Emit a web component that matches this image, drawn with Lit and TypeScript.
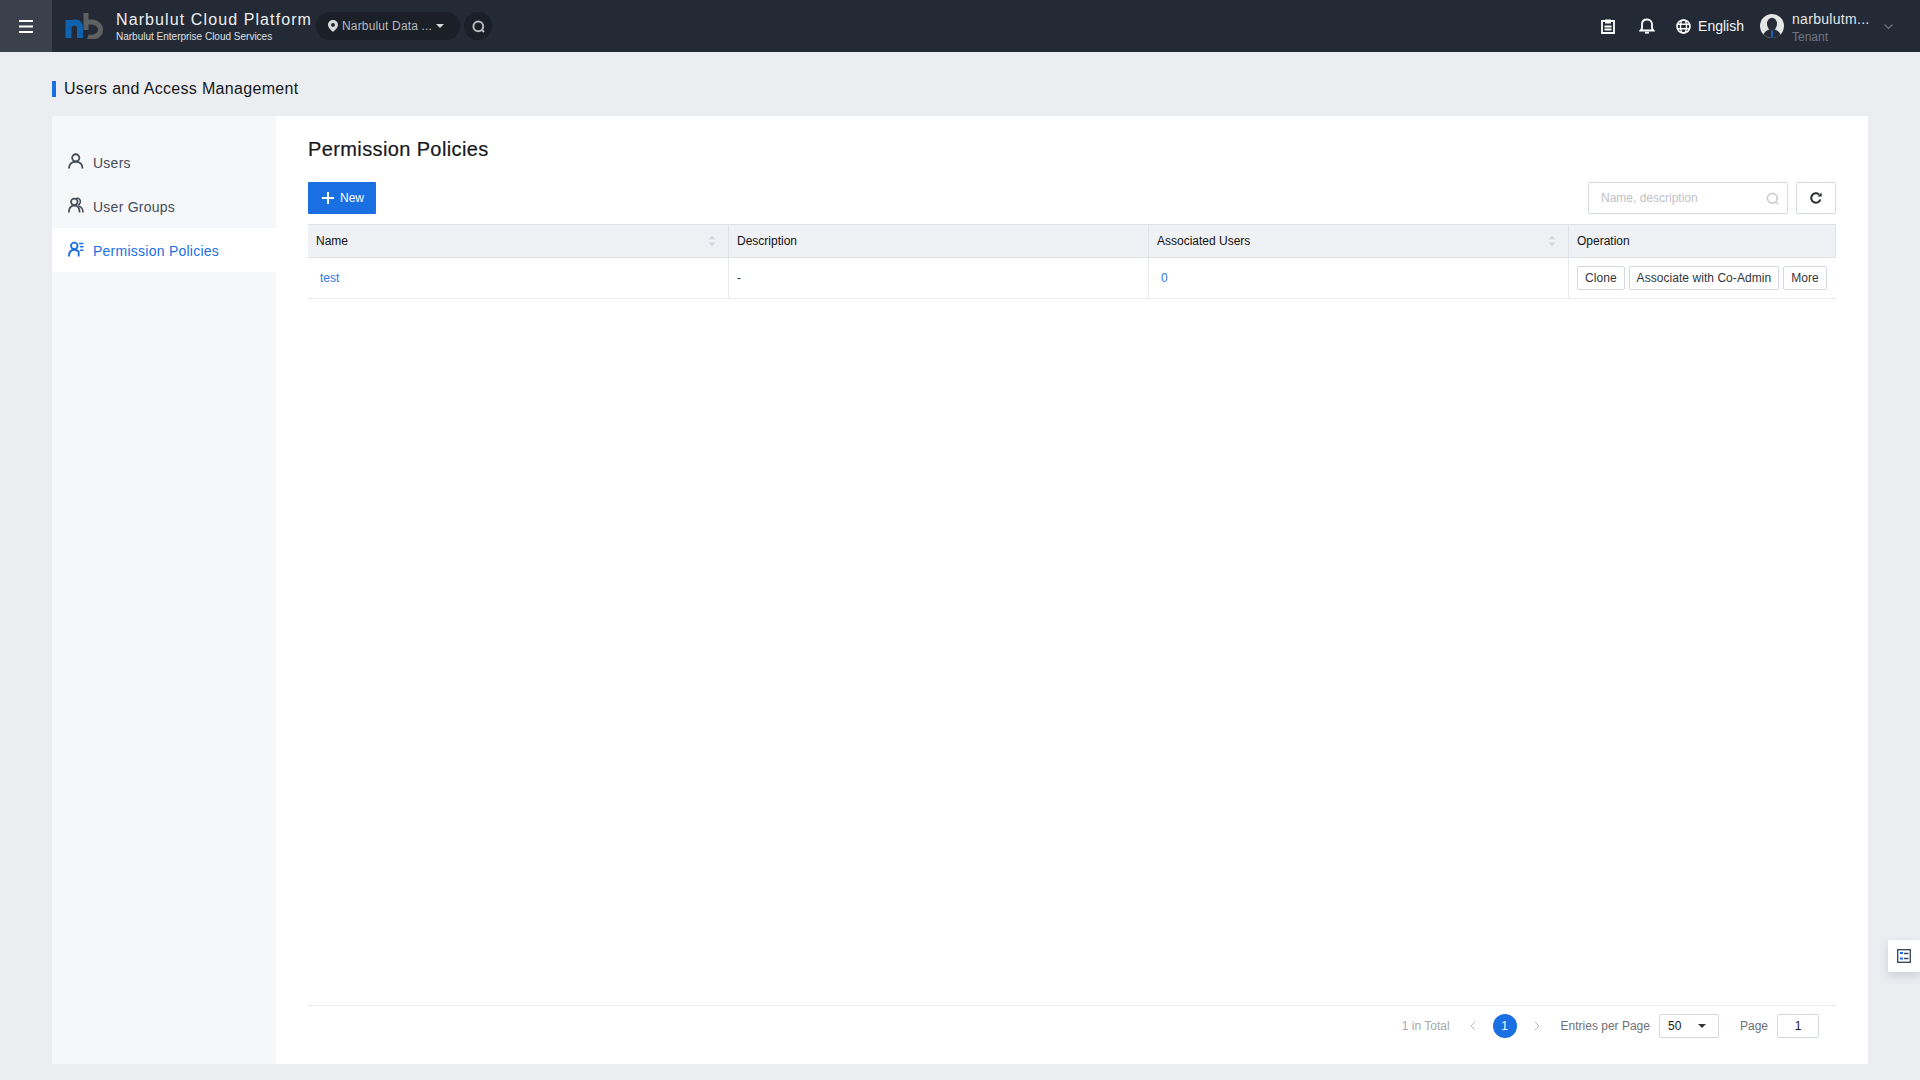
import { LitElement, css, html, svg } from 'lit'
import { customElement, property } from 'lit/decorators.js'

const sortIcon = html`<svg class="sort" width="8" height="12" viewBox="0 0 8 12">
  <path d="M4 0.5 L7.5 4.5 H0.5 Z" fill="#d5d8df" />
  <path d="M4 11.5 L7.5 7.5 H0.5 Z" fill="#d5d8df" />
</svg>`

const navIcons: Record<string, unknown> = {
  users: svg`<circle cx="8" cy="5" r="3.7" fill="none" stroke="currentColor" stroke-width="1.9" />
    <path d="M1 16 C1 11.5 4 9 8 9 C12 9 15 11.5 15 16" fill="none" stroke="currentColor" stroke-width="1.9" />`,
  groups: svg`<circle cx="6.5" cy="5" r="3.4" fill="none" stroke="currentColor" stroke-width="1.8" />
    <path d="M8.5 1.5 C11.5 0.8 13.2 3 12.7 5.5 C12.4 7 11.4 8 10.2 8.5" fill="none" stroke="currentColor" stroke-width="1.6" />
    <path d="M0.9 16 C0.9 11.5 3 9 6.5 9 C10 9 12 11.5 12 16" fill="none" stroke="currentColor" stroke-width="1.8" />
    <path d="M11 9.5 C14 10 15.4 12.5 15.4 16" fill="none" stroke="currentColor" stroke-width="1.6" />`,
  policies: svg`<circle cx="6.5" cy="5" r="3.4" fill="none" stroke="currentColor" stroke-width="1.9" />
    <path d="M1 16 C1 11.5 3 9 6.5 9 C8.5 9 10 9.8 11 11 V16" fill="none" stroke="currentColor" stroke-width="1.9" />
    <path d="M11.5 2.5 H16 M12.5 6 H16 M12.5 9.5 H16" fill="none" stroke="currentColor" stroke-width="1.5" />`,
}

@customElement('nav-item')
export class NavItem extends LitElement {
  static styles = css`
    :host {
      display: flex;
      align-items: center;
      height: 44px;
      padding-left: 16px;
      gap: 9px;
      font-size: 14px;
      letter-spacing: 0.25px;
      color: #444c5b;
    }
    :host([active]) {
      background: #fff;
      color: #1a6fe3;
    }
    svg {
      display: block;
      margin-top: -2px;
    }
    span {
      padding-top: 2px;
    }
  `

  @property({ type: String })
  icon: string = 'users'

  @property({ type: Boolean, reflect: true })
  active: boolean = false

  protected render(): unknown {
    return html`
      <svg width="16" height="17" viewBox="0 0 16.5 17.5">${navIcons[this.icon]}</svg>
      <span><slot></slot></span>
    `
  }
}

@customElement('app-root')
export class AppRoot extends LitElement {
  static styles = css`
    :host {
      display: block;
      width: 1920px;
      height: 1080px;
      overflow: hidden;
      position: relative;
      background: #ebedf1;
      font-family: 'Liberation Sans', Arial, sans-serif;
      color: #16181c;
    }
    svg {
      display: block;
      flex: none;
    }
    .top {
      display: flex;
      align-items: center;
      height: 52px;
      background: #232a35;
      color: #fff;
    }
    .burger {
      display: flex;
      align-items: center;
      justify-content: center;
      width: 52px;
      height: 52px;
      background: #3a414b;
    }
    .logo {
      margin-left: 13px;
    }
    .brand {
      margin-left: 13px;
      padding-top: 2px;
      display: flex;
      flex-direction: column;
      white-space: nowrap;
    }
    .brand-name {
      font-size: 16px;
      line-height: 20px;
      letter-spacing: 1.1px;
      color: #eef0f2;
    }
    .brand-sub {
      font-size: 10px;
      line-height: 14px;
      color: #dfe1e4;
    }
    .region {
      display: flex;
      align-items: center;
      width: 144px;
      height: 28px;
      box-sizing: border-box;
      margin-left: 4px;
      padding-left: 12px;
      border-radius: 14px;
      background: #1b1f27;
      color: #b6b9be;
      font-size: 12px;
      letter-spacing: 0.15px;
      white-space: nowrap;
    }
    .region-name {
      margin-left: 4px;
      width: 94px;
    }
    .round {
      display: flex;
      align-items: center;
      justify-content: center;
      width: 28px;
      height: 28px;
      margin-left: 4px;
      border-radius: 50%;
      background: #1b1f27;
    }
    .top-right {
      margin-left: auto;
      display: flex;
      align-items: center;
      height: 52px;
      padding-right: 27px;
    }
    .bell {
      margin-left: 24px;
    }
    .globe {
      margin-left: 21px;
    }
    .lang {
      margin-left: 7px;
      font-size: 14px;
      color: #f4f5f6;
    }
    .avatar {
      margin-left: 16px;
    }
    .account {
      margin-left: 8px;
      padding-top: 4px;
      width: 92px;
      display: flex;
      flex-direction: column;
    }
    .account-name {
      font-size: 14px;
      line-height: 18px;
      color: #e4e6e9;
      letter-spacing: 0.3px;
    }
    .account-role {
      font-size: 12px;
      line-height: 18px;
      color: #6e7580;
    }
    .crumb {
      display: flex;
      align-items: center;
      height: 64px;
      box-sizing: border-box;
      padding: 9px 0 0 52px;
      font-size: 16px;
      letter-spacing: 0.32px;
      color: #16181c;
    }
    .crumb::before {
      content: '';
      width: 4px;
      height: 16px;
      margin-right: 8px;
      background: #1a6fe3;
    }
    .card {
      display: flex;
      height: 948px;
      margin: 0 52px;
      background: #fff;
    }
    .side {
      width: 224px;
      flex: none;
      padding-top: 24px;
      background: #f6f7f9;
      box-sizing: border-box;
    }
    .content {
      flex: 1;
      min-width: 0;
      display: flex;
      flex-direction: column;
      padding: 0 32px;
    }
    h1 {
      margin: 0;
      height: 66px;
      line-height: 66px;
      font-size: 20px;
      font-weight: 400;
      letter-spacing: 0.38px;
      color: #16181c;
      -webkit-text-stroke: 0.2px #16181c;
    }
    .tools {
      display: flex;
      align-items: center;
      height: 32px;
      margin-bottom: 10px;
    }
    .new {
      display: flex;
      align-items: center;
      width: 68px;
      height: 32px;
      padding-left: 14px;
      gap: 6px;
      box-sizing: border-box;
      border-radius: 1px;
      background: #1a6fe3;
      color: #fff;
      font-size: 12px;
    }
    .search {
      margin-left: auto;
      display: flex;
      align-items: center;
      justify-content: space-between;
      width: 200px;
      height: 32px;
      box-sizing: border-box;
      padding: 0 8px 0 12px;
      border: 1px solid #d4d8e0;
      border-radius: 2px;
      color: #bfc2c7;
      font-size: 12px;
    }
    .refresh {
      display: flex;
      align-items: center;
      justify-content: center;
      width: 40px;
      height: 32px;
      margin-left: 8px;
      box-sizing: border-box;
      border: 1px solid #d4d8e0;
      border-radius: 2px;
    }
    .grid {
      display: grid;
      grid-template-columns: 421px 420px 420px 267px;
      font-size: 12px;
    }
    .th {
      display: flex;
      align-items: center;
      justify-content: space-between;
      height: 34px;
      box-sizing: border-box;
      padding: 0 12px 0 8px;
      background: #f0f1f5;
      border-top: 1px solid #dfe1e9;
      border-bottom: 1px solid #dfe1e9;
      border-right: 1px solid #dfe1e9;
      color: #111;
    }
    .th:last-child,
    .td:last-child {
      border-right: 0;
    }
    .td {
      display: flex;
      align-items: center;
      height: 41px;
      box-sizing: border-box;
      padding: 0 8px 1px;
      border-bottom: 1px solid #e8e9ef;
      border-right: 1px solid #e8e9ef;
      color: #33363b;
    }
    .td.link {
      padding-left: 12px;
      color: #2a77e0;
    }
    .td.ops {
      gap: 4px;
    }
    .btn {
      height: 24px;
      line-height: 22px;
      box-sizing: border-box;
      padding: 0 7px;
      border: 1px solid #d4d8e0;
      border-radius: 2px;
      color: #33363b;
      letter-spacing: 0.05px;
      white-space: nowrap;
    }
    .foot {
      margin-top: auto;
      height: 59px;
      display: flex;
      align-items: center;
      justify-content: flex-end;
      box-sizing: border-box;
      padding: 0 17px 18px 0;
      border-top: 1px solid #e8e9ef;
      font-size: 12px;
      color: #6d7076;
    }
    .total {
      color: #a6a9ae;
      margin-right: 20px;
    }
    .pager-arrow {
      color: #b5b8bd;
    }
    .num {
      width: 24px;
      height: 24px;
      line-height: 24px;
      margin: 0 17px;
      border-radius: 50%;
      background: #1a6fe3;
      color: #fff;
      text-align: center;
    }
    .entries {
      margin-left: 21px;
    }
    .select {
      display: flex;
      align-items: center;
      justify-content: space-between;
      width: 60px;
      height: 24px;
      margin-left: 9px;
      box-sizing: border-box;
      padding: 0 12px 0 8px;
      border: 1px solid #d4d8e0;
      border-radius: 2px;
      color: #16181c;
    }
    .page-label {
      margin-left: 21px;
    }
    .page-input {
      width: 42px;
      height: 24px;
      line-height: 22px;
      margin-left: 9px;
      box-sizing: border-box;
      border: 1px solid #d4d8e0;
      border-radius: 2px;
      color: #16181c;
      text-align: center;
    }
    .float {
      position: absolute;
      right: 0;
      top: 940px;
      width: 32px;
      height: 32px;
      display: flex;
      align-items: center;
      justify-content: center;
      background: #fff;
      box-shadow: 0 4px 10px rgba(40, 50, 70, 0.16);
    }
  `

  protected render(): unknown {
    return html`
      <div class="top">
        <div class="burger">
          <svg width="14" height="13" viewBox="0 0 14 13">
            <path d="M0 1 H14 M0 6.5 H14 M0 12 H14" stroke="#fff" stroke-width="2" />
          </svg>
        </div>
        <svg class="logo" width="38" height="26" viewBox="0 0 38 26">
          <path d="M3.5 25 V7 M3.5 15 C3.5 11 6 9.5 9.5 9.5 C13 9.5 15 11 15 15 V25" fill="none" stroke="#0f62ae" stroke-width="6" />
          <path d="M21 0 V17 M21 10 C28 7.5 35.5 10.5 35.5 17 C35.5 22.5 29 25.5 23 23.5" fill="none" stroke="#5e6062" stroke-width="5" />
        </svg>
        <div class="brand">
          <span class="brand-name">Narbulut Cloud Platform</span>
          <span class="brand-sub">Narbulut Enterprise Cloud Services</span>
        </div>
        <div class="region">
          <svg width="10" height="12" viewBox="0 0 10 12">
            <path fill-rule="evenodd" d="M5 0 C2.2 0 0 2.1 0 4.8 C0 7.8 3.4 10.6 5 12 C6.6 10.6 10 7.8 10 4.8 C10 2.1 7.8 0 5 0 Z M5 3 A1.9 1.9 0 1 1 5 6.8 A1.9 1.9 0 1 1 5 3 Z" fill="#d6d8db" />
          </svg>
          <span class="region-name">Narbulut Data ...</span>
          <svg width="8" height="4" viewBox="0 0 8 4"><path d="M0 0 H8 L4 4 Z" fill="#d6d8db" /></svg>
        </div>
        <div class="round">
          <svg width="13" height="13" viewBox="0 0 13 13">
            <circle cx="6.3" cy="6.3" r="4.9" fill="none" stroke="#b6b9be" stroke-width="2" />
            <path d="M9.8 9.8 L12 12" stroke="#b6b9be" stroke-width="2" />
          </svg>
        </div>
        <div class="top-right">
          <svg width="14" height="15" viewBox="0 0 14 15">
            <path d="M1 2 H13 V14 H1 Z M3.5 7.5 H10.5 M3.5 10.5 H10.5" fill="none" stroke="#fff" stroke-width="1.8" />
            <path d="M4 0.5 H10 V4.5 H4 Z" fill="#fff" />
          </svg>
          <svg class="bell" width="16" height="16" viewBox="0 0 16 16">
            <path d="M1.5 12.5 H14.5 L13 10.5 V6.5 C13 3.5 11 1.5 8 1.5 C5 1.5 3 3.5 3 6.5 V10.5 Z" fill="none" stroke="#fff" stroke-width="1.8" />
            <path d="M6 14.7 H10" stroke="#fff" stroke-width="1.8" />
          </svg>
          <svg class="globe" width="15" height="15" viewBox="0 0 15 15">
            <circle cx="7.5" cy="7.5" r="6.5" fill="none" stroke="#fff" stroke-width="1.6" />
            <ellipse cx="7.5" cy="7.5" rx="3" ry="6.5" fill="none" stroke="#fff" stroke-width="1.4" />
            <path d="M1 5.3 H14 M1 9.7 H14" stroke="#fff" stroke-width="1.4" />
          </svg>
          <span class="lang">English</span>
          <svg class="avatar" width="24" height="24" viewBox="0 0 24 24">
            <circle cx="12" cy="12" r="12" fill="#e6e6e7" />
            <ellipse cx="12" cy="10" rx="5" ry="6.2" fill="#262c35" />
            <path d="M3.5 20.5 C5 17 8 16 10 15 H14 C16 16 19 17 20.5 20.5 C18 23 15 24 12 24 C9 24 6 23 3.5 20.5 Z" fill="#262c35" />
            <path d="M11.2 16.5 H12.8 V23.5 H11.2 Z" fill="#1a6fe3" />
          </svg>
          <div class="account">
            <span class="account-name">narbulutm...</span>
            <span class="account-role">Tenant</span>
          </div>
          <svg width="9" height="5" viewBox="0 0 9 5">
            <path d="M0.5 0.5 L4.5 4.5 L8.5 0.5" fill="none" stroke="#6e7580" stroke-width="1.1" />
          </svg>
        </div>
      </div>

      <div class="crumb">Users and Access Management</div>

      <div class="card">
        <div class="side">
          <nav-item icon="users">Users</nav-item>
          <nav-item icon="groups">User Groups</nav-item>
          <nav-item icon="policies" active>Permission Policies</nav-item>
        </div>
        <div class="content">
          <h1>Permission Policies</h1>
          <div class="tools">
            <div class="new">
              <svg width="12" height="12" viewBox="0 0 12 12">
                <path d="M6 0 V12 M0 6 H12" stroke="#fff" stroke-width="2" />
              </svg>
              New
            </div>
            <div class="search">
              Name, description
              <svg width="13" height="13" viewBox="0 0 13 13">
                <circle cx="6.3" cy="6.3" r="4.9" fill="none" stroke="#c9ccd1" stroke-width="1.7" />
                <path d="M9.8 9.8 L12 12" stroke="#c9ccd1" stroke-width="1.7" />
              </svg>
            </div>
            <div class="refresh">
              <svg width="12" height="12" viewBox="0 0 12 12">
                <path d="M10.4 7.5 A4.7 4.7 0 1 1 9 2.4" fill="none" stroke="#2a2d32" stroke-width="2" />
                <path d="M7.4 4.6 H11.6 V0.4 Z" fill="#2a2d32" />
              </svg>
            </div>
          </div>
          <div class="grid">
            <div class="th">Name ${sortIcon}</div>
            <div class="th">Description</div>
            <div class="th">Associated Users ${sortIcon}</div>
            <div class="th">Operation</div>
            <div class="td link">test</div>
            <div class="td">-</div>
            <div class="td link">0</div>
            <div class="td ops">
              <span class="btn">Clone</span>
              <span class="btn">Associate with Co-Admin</span>
              <span class="btn">More</span>
            </div>
          </div>
          <div class="foot">
            <span class="total">1 in Total</span>
            <svg class="pager-arrow" width="6" height="10" viewBox="0 0 6 10">
              <path d="M5 1 L1 5 L5 9" fill="none" stroke="currentColor" stroke-width="1" />
            </svg>
            <span class="num">1</span>
            <svg class="pager-arrow" width="6" height="10" viewBox="0 0 6 10">
              <path d="M1 1 L5 5 L1 9" fill="none" stroke="currentColor" stroke-width="1" />
            </svg>
            <span class="entries">Entries per Page</span>
            <div class="select">
              50
              <svg width="8" height="4" viewBox="0 0 8 4"><path d="M0 0 H8 L4 4 Z" fill="#33363b" /></svg>
            </div>
            <span class="page-label">Page</span>
            <div class="page-input">1</div>
          </div>
        </div>
      </div>

      <div class="float">
        <svg width="14" height="14" viewBox="0 0 14 14">
          <rect x="0.7" y="0.7" width="12.6" height="12.6" fill="#fff" stroke="#3f4a5c" stroke-width="1.4" />
          <path d="M3 4 H6 M3 9.5 H6" stroke="#1a6fe3" stroke-width="1.8" />
          <path d="M7 4.5 H11.5 M7 9.5 H11.5" stroke="#3f4a5c" stroke-width="1.4" />
        </svg>
      </div>
    `
  }
}
